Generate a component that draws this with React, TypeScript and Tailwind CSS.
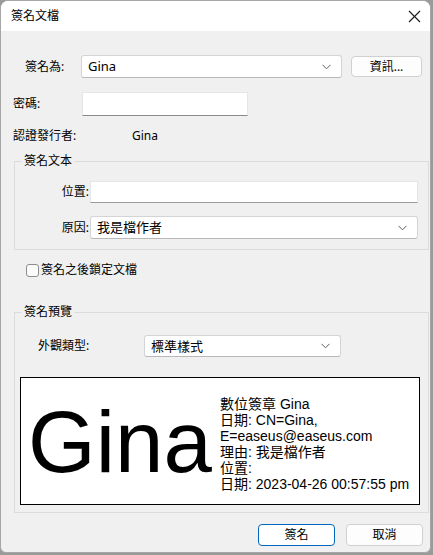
import React from "react";

const UI = '"Noto Sans","Noto Sans CJK TC",sans-serif';
const PREV = '"Liberation Sans","Noto Sans CJK TC",sans-serif';

function Chevron() {
  return (
    <svg width="9" height="6" viewBox="0 0 9 6" className="shrink-0">
      <polyline points="0.5,0.8 4.5,4.8 8.5,0.8" fill="none" stroke="#5f5f5f" strokeWidth="1" />
    </svg>
  );
}

function Select({ value, className }: { value: string; className: string }) {
  return (
    <div
      className={`flex items-center justify-between bg-white border border-[#d4d4d4] border-b-[#b8b8b8] rounded-[3px] pl-[6px] pr-[10px] ${className}`}
    >
      <span className="text-[13px] leading-none text-black">{value}</span>
      <Chevron />
    </div>
  );
}

function Group({ title, className, children }: { title: string; className: string; children: React.ReactNode }) {
  return (
    <div className={`relative border border-[#dcdcdc] ${className}`}>
      <span className="absolute left-[7px] top-[-9px] bg-[#f0f0f0] px-[2px] text-[12px] leading-[16px] text-black">
        {title}
      </span>
      {children}
    </div>
  );
}

export default function App() {
  return (
    <div className="w-[433px] h-[555px] bg-[#9a9a9a] overflow-hidden" style={{ fontFamily: UI }}>
      <div className="w-[431px] h-[553px] bg-[#f0f0f0] border border-[#a6a6a6] rounded-t-[8px] rounded-b-[6px] overflow-hidden flex flex-col">
        {/* Title bar */}
        <div className="h-[30px] bg-white flex items-center justify-between pl-[10px] pr-[8px] shrink-0">
          <span className="text-[12px] text-black leading-none">簽名文檔</span>
          <svg width="13" height="13" viewBox="0 0 13 13" className="mr-[1px]">
            <line x1="1" y1="1" x2="12" y2="12" stroke="#1a1a1a" strokeWidth="1.1" />
            <line x1="12" y1="1" x2="1" y2="12" stroke="#1a1a1a" strokeWidth="1.1" />
          </svg>
        </div>

        {/* Body */}
        <div className="flex flex-col text-[12px] text-black">
          {/* Row 1 */}
          <div className="flex items-center mt-[24px] h-[23px]">
            <span className="w-[80px] pl-[24px] leading-none">簽名為:</span>
            <Select value="Gina" className="w-[261px] h-[23px]" />
            <div className="ml-[9px] w-[71px] h-[21px] bg-[#fdfdfd] border border-[#d0d0d0] rounded-[4px] flex items-center justify-center leading-none">
              資訊...
            </div>
          </div>

          {/* Row 2 */}
          <div className="flex items-center mt-[14px] h-[24px]">
            <span className="w-[81px] pl-[12px] leading-none">密碼:</span>
            <div className="w-[166px] h-[24px] bg-white border border-[#e6e6e6] border-b-[#8a8a8a]" />
          </div>

          {/* Row 3 */}
          <div className="flex items-center mt-[10px] h-[20px]">
            <span className="w-[131px] pl-[12px] leading-none">認證發行者:</span>
            <span className="leading-none">Gina</span>
          </div>

          {/* Group 1 */}
          <Group title="簽名文本" className="ml-[13px] w-[415px] mt-[15px] pt-[19px] pb-[10px]">
            <div className="flex items-center h-[22px]">
              <span className="w-[74px] text-right leading-none">位置:</span>
              <div className="ml-[1px] w-[328px] h-[22px] bg-white border border-[#e6e6e6] border-b-[#9a9a9a]" />
            </div>
            <div className="flex items-center mt-[13px] h-[23px]">
              <span className="w-[74px] text-right leading-none">原因:</span>
              <Select value="我是檔作者" className="ml-[1px] w-[328px] h-[23px] border-[#8a8a8a] border-b-[#8a8a8a] rounded-[2px] pl-[3px]" />
            </div>
          </Group>

          {/* Checkbox */}
          <div className="flex items-center ml-[25px] mt-[12px] h-[16px]">
            <div className="w-[13px] h-[13px] bg-[#fbfbfb] border border-[#8c8c8c] rounded-[3px]" />
            <span className="ml-[2px] leading-none">簽名之後鎖定文檔</span>
          </div>

          {/* Group 2 */}
          <Group title="簽名預覽" className="ml-[13px] w-[415px] mt-[34px] pt-[22px] pb-[7px]">
            <div className="flex items-center h-[22px]">
              <span className="w-[129px] pl-[23px] leading-none">外觀類型:</span>
              <Select value="標準樣式" className="w-[197px] h-[22px] pl-[3px]" />
            </div>
            <div
              className="ml-[5px] mt-[20px] w-[400px] h-[128px] bg-white border border-black flex items-center"
              style={{ fontFamily: PREV }}
            >
              <span className="ml-[7px] w-[192px] text-[87px] leading-none text-black mt-[1px]">Gina</span>
              <div className="text-[14px] leading-[16px] text-black mt-[6px]">
                <div>數位簽章 Gina</div>
                <div>日期: CN=Gina,</div>
                <div>E=easeus@easeus.com</div>
                <div>理由: 我是檔作者</div>
                <div>位置:</div>
                <div>日期: 2023-04-26 00:57:55 pm</div>
              </div>
            </div>
          </Group>

          {/* Buttons */}
          <div className="flex justify-end mt-[11px] pr-[7px] gap-[11px]">
            <div className="w-[77px] h-[22px] bg-white border border-[#0067c0] rounded-[4px] flex items-center justify-center leading-none">
              簽名
            </div>
            <div className="w-[77px] h-[22px] bg-[#fdfdfd] border border-[#d0d0d0] rounded-[4px] flex items-center justify-center leading-none">
              取消
            </div>
          </div>
        </div>
      </div>
    </div>
  );
}
